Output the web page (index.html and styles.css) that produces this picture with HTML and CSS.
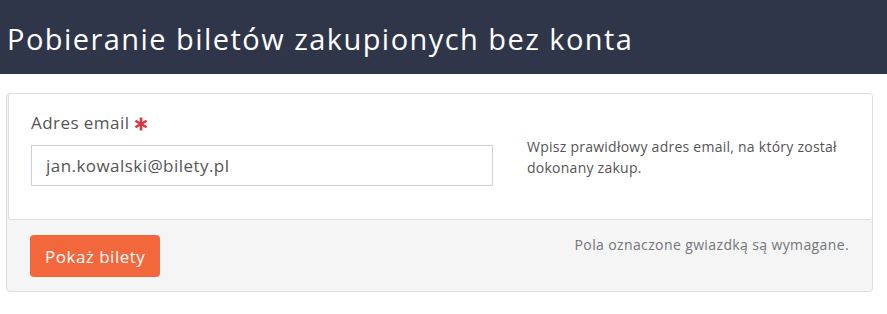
FILE: index.html
```html
<!DOCTYPE html>
<html lang="pl">
<head>
<meta charset="utf-8">
<title>Pobieranie biletów</title>
<link rel="stylesheet" href="styles.css">
</head>
<body>
<header class="page-header">
  <h1 class="page-title">Pobieranie biletów zakupionych bez konta</h1>
</header>
<main class="panel">
  <div class="panel-body">
    <div class="form-row">
      <div class="field">
        <label class="field-label" for="email">Adres email <svg class="req" viewBox="0 0 14 14" width="14" height="14" aria-label="wymagane"><g stroke="#e0323f" stroke-width="2.6" stroke-linecap="butt"><line x1="7" y1="0.5" x2="7" y2="13.5"/><line x1="1.4" y1="3.75" x2="12.6" y2="10.25"/><line x1="1.4" y1="10.25" x2="12.6" y2="3.75"/></g></svg></label>
        <input class="field-input" id="email" type="text" value="jan.kowalski@bilety.pl">
      </div>
      <p class="help">Wpisz prawidłowy adres email, na który został dokonany zakup.</p>
    </div>
  </div>
  <div class="panel-footer">
    <button class="btn-primary" type="button">Pokaż bilety</button>
    <p class="footer-note">Pola oznaczone gwiazdką są wymagane.</p>
  </div>
</main>
</body>
</html>
```

FILE: styles.css
```css
* { box-sizing: border-box; }
body {
  margin: 0;
  font-family: "Open Sans", Lato, "Liberation Sans", sans-serif;
  color: #555;
  background: #fff;
}
.page-header {
  background: #30364a;
  height: 74px;
  display: flex;
  align-items: center;
  padding: 0 7px;
}
.page-title {
  margin: 0;
  color: #fff;
  font-weight: 400;
  font-size: 29px;
  letter-spacing: 1.45px;
  line-height: 1;
  padding-top: 2px;
}
.panel {
  margin: 19px 14px 0 6px;
  border: 1px solid #ddd;
  border-radius: 4px;
  background: #f5f5f5;
}
.panel-body {
  background: #fff;
  border: 1px solid #ddd;
  border-top: 0;
  border-right: 0;
  border-radius: 3px;
  margin-left: 1px;
  padding: 17px 22px 33px;
}
.form-row {
  display: grid;
  grid-template-columns: 462px 1fr;
  column-gap: 34px;
}
.field-label {
  display: flex;
  align-items: center;
  gap: 5px;
  font-size: 17px;
  letter-spacing: 0.45px;
  line-height: 24px;
  margin-bottom: 10px;
}
.req {
  display: block;
  margin-top: 1px;
}
.field-input {
  display: block;
  width: 100%;
  height: 41px;
  border: 1px solid #ccd1d9;
  border-radius: 0;
  padding: 0 14px;
  font-family: inherit;
  font-size: 17px;
  letter-spacing: 0.45px;
  color: #555;
  background: #fff;
  outline: none;
}
.help {
  margin: 25px 0 0;
  font-size: 14px;
  letter-spacing: 0.25px;
  line-height: 21px;
  color: #555;
}
.panel-footer {
  display: flex;
  justify-content: space-between;
  align-items: flex-start;
  padding: 15px 23px 14px;
}
.btn-primary {
  background: #f2673b;
  color: #fff;
  border: 0;
  border-radius: 4px;
  height: 42px;
  padding: 0 15px;
  font-family: inherit;
  font-size: 17px;
  letter-spacing: 0.5px;
}
.footer-note {
  margin: 0;
  padding-top: 1px;
  font-size: 14px;
  letter-spacing: 0.38px;
  line-height: 18px;
  color: #72757c;
}
```
